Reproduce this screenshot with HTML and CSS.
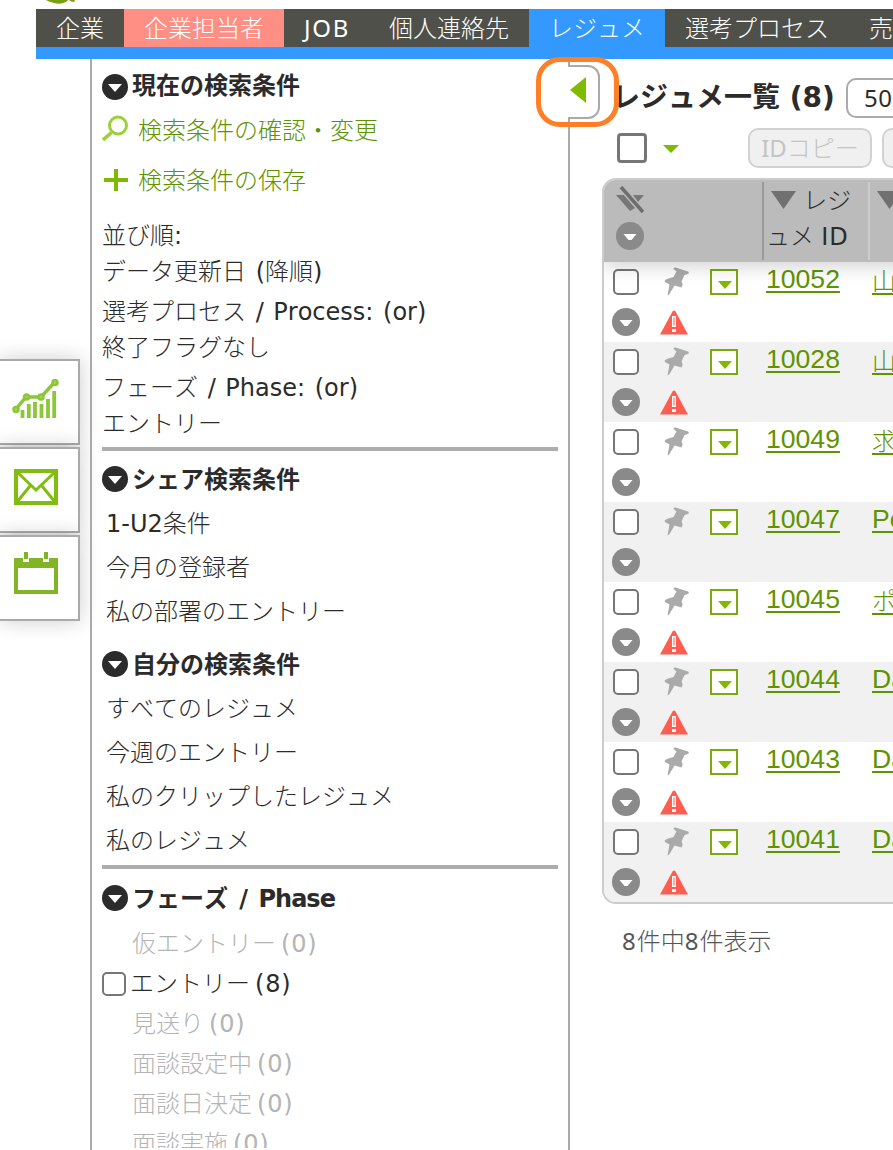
FILE: index.html
```html
<!DOCTYPE html>
<html lang="ja">
<head>
  <meta charset="UTF-8">
  <meta name="viewport" content="width=device-width, initial-scale=1.0">
  <title>レジュメ一覧</title>
  <link rel="stylesheet" href="styles.css">
</head>
<body>

  <!-- shared icons -->
  <svg class="defs" width="0" height="0">
    <symbol id="i-toggle" viewBox="0 0 26 26">
      <circle cx="13" cy="13" r="13" fill="#2b2b2b"/>
      <path d="M6 10h14l-7 8z" fill="#fff"/>
    </symbol>
    <symbol id="i-more" viewBox="0 0 28 28">
      <circle cx="14" cy="14" r="14" fill="#8a8a8a"/>
      <path d="M7.500 12h13l-5 6h-3z" fill="#fff"/>
    </symbol>
    <symbol id="i-pin" viewBox="0 0 26 30">
      <path d="M9.500 2q0-2 2-1.500L24 4.500q1.500 1 0 2.500l-3.500 1-3 6.500q2 3 0 6L10.500 18.500 5.500 27l-2 1.500 2-11L1 15q-1.500-2.500 5-4l3.500-1 3-5.500z" fill="#aaa"/>
    </symbol>
    <symbol id="i-warn" viewBox="0 0 28 25">
      <path d="M12.500 1.500q1.500-2 3 0L28 24.500H0z" fill="#ff5d50"/>
      <path d="M12 6h4v11h-4zM12 19h4v3h-4z" fill="#fff"/>
      <path d="M13 7.500h2v8h-2z" fill="#ffaca6"/>
    </symbol>
  </svg>

  <header class="logo">
    <svg width="36" height="5" viewBox="0 0 36 5"><path d="M1 0h22l-2 2q-6 3-12 1-5-1-8-3zM24 0h6l-1 2q-3 0-5-2z" fill="#7a9f14"/></svg>
  </header>

  <nav class="menu">
    <a>企業</a>
    <a class="contact">企業担当者</a>
    <a><span class="job">JOB</span></a>
    <a>個人連絡先</a>
    <a class="active">レジュメ</a>
    <a>選考プロセス</a>
    <a>売上</a>
  </nav>

  <div class="layout">
    <div class="rail">
      <div class="rail-tab">
        <svg width="48" height="42" viewBox="0 0 48 42" fill="none" stroke="#8cc63a">
          <path d="M4 30 14 18h15L43 3" stroke-width="3.500"/>
          <g fill="#a8d05c" stroke-width="2.500"><circle cx="4" cy="30.500" r="2.500"/><circle cx="14.500" cy="18" r="2.500"/><circle cx="29" cy="18" r="2.500"/><circle cx="43" cy="3.500" r="2.500"/></g>
          <path d="M10.500 39v-8M16.800 39V25M23 39V23M29.500 39V25M36 39V20M42.200 39V12" stroke-width="3.800"/>
        </svg>
      </div>
      <div class="rail-tab">
        <svg width="44" height="36" viewBox="0 0 44 36" fill="none" stroke="#80bd10">
          <path d="M2 2h40v32H2z" stroke-width="4"/>
          <path d="M3 3l19 18L41 3M3 33l13-16M41 33L28 17" stroke-width="3"/>
        </svg>
      </div>
      <div class="rail-tab">
        <svg width="44" height="44" viewBox="0 0 44 44">
          <path d="M0 7h44v36H0zM4 17v22h36V17z" fill="#82b526" fill-rule="evenodd"/>
          <path d="M9 6h6v5H9zM29 6h6v5h-6z" fill="#fff"/>
          <path d="M10 1h4v7h-4zM30 1h4v7h-4z" fill="#82b526"/>
        </svg>
      </div>
    </div>

    <aside class="sidebar">
      <h2 class="first"><svg width="26" height="26"><use href="#i-toggle"/></svg>現在の検索条件</h2>
      <a class="action">
        <svg class="lens" width="26" height="26" viewBox="0 0 26 26" fill="none"><circle cx="16" cy="10.500" r="8.500" stroke="#9bd03c" stroke-width="3"/><path d="M9.500 17.500 1 25" stroke="#9bd03c" stroke-width="3.500"/></svg>
        <span>検索条件の確認・変更</span>
      </a>
      <a class="action">
        <svg width="26" height="26" viewBox="0 0 26 26"><path d="M2 13h24M14 2v22" stroke="#7fba00" stroke-width="4"/></svg>
        <span>検索条件の保存</span>
      </a>

      <div class="cond">並び順<span class="en">:</span><br>データ更新日<span class="en"> (</span>降順<span class="en">)</span></div>
      <div class="cond">選考プロセス<span class="en"> / Process: (or)</span><br>終了フラグなし</div>
      <div class="cond">フェーズ<span class="en"> / Phase: (or)</span><br>エントリー</div>

      <hr>
      <h2><svg width="26" height="26"><use href="#i-toggle"/></svg>シェア検索条件</h2>
      <ul>
        <li><span class="en">1-U2</span>条件</li>
        <li>今月の登録者</li>
        <li>私の部署のエントリー</li>
      </ul>
      <h2 class="own"><svg width="26" height="26"><use href="#i-toggle"/></svg>自分の検索条件</h2>
      <ul>
        <li>すべてのレジュメ</li>
        <li>今週のエントリー</li>
        <li>私のクリップしたレジュメ</li>
        <li>私のレジュメ</li>
      </ul>

      <hr class="last">
      <h2><svg width="26" height="26"><use href="#i-toggle"/></svg><span>フェーズ<span class="en"> / Phase</span></span></h2>
      <div class="phases">
        <div class="phase">仮エントリー<span class="en">(0)</span></div>
        <div class="phase on"><i class="check"></i>エントリー<span class="en">(8)</span></div>
        <div class="phase">見送り<span class="en">(0)</span></div>
        <div class="phase">面談設定中<span class="en">(0)</span></div>
        <div class="phase">面談日決定<span class="en">(0)</span></div>
        <div class="phase">面談実施<span class="en">(0)</span></div>
      </div>

      <div class="collapse"><svg width="16" height="26" viewBox="0 0 16 26"><path d="M0 13 16 0v26z" fill="#80bb00"/></svg></div>
      <div class="highlight"></div>
    </aside>

    <main>
      <div class="title-row">
        <h1>レジュメ一覧<span class="en"> (8)</span></h1>
        <div class="select">50</div>
      </div>
      <div class="tools">
        <i class="check big"></i>
        <svg class="caret" width="16" height="8"><path d="M0 0h16L8 8z" fill="#7fba00"/></svg>
        <button disabled><span class="id-label">ID</span>コピー</button>
        <button disabled></button>
      </div>

      <div class="table">
        <div class="thead">
          <div class="th-icons">
            <svg width="28" height="28" viewBox="0 0 28 28"><path d="M0 9h8l11 13-5 3zM17 9h11l-6 7z" fill="#777"/><path d="M5 1l22 25" stroke="#bbb" stroke-width="6"/><path d="M5 1l22 25" stroke="#6e6e6e" stroke-width="3.500"/></svg>
            <svg width="28" height="28"><use href="#i-more"/></svg>
          </div>
          <div class="th"><svg width="25" height="18"><path d="M0 0h25L12.500 18z" fill="#707070"/></svg> レジ<br>ュメ <span class="en">ID</span></div>
          <div class="th light"><svg width="25" height="18"><path d="M0 0h25L12.500 18z" fill="#707070"/></svg></div>
        </div>
        <div id="rows"></div>
      </div>
      <p class="count"><span class="en">8</span>件中<span class="en">8</span>件表示</p>
    </main>
  </div>

  <script>
    const resumes = [
      { id: 10052, name: '山', warn: true },
      { id: 10028, name: '山', warn: true },
      { id: 10049, name: '求', warn: false },
      { id: 10047, name: 'Pe', warn: false },
      { id: 10045, name: 'ポ', warn: true },
      { id: 10044, name: 'Da', warn: true },
      { id: 10043, name: 'Da', warn: true },
      { id: 10041, name: 'Da', warn: true }
    ];

    document.getElementById('rows').innerHTML = resumes.map(r => `
      <div class="row">
        <i class="check"></i>
        <svg class="pin" width="26" height="30"><use href="#i-pin"/></svg>
        <span class="drop"><svg width="14" height="8"><path d="M0 0h14L7 8z" fill="#7fba00"/></svg></span>
        <a class="id">${r.id}</a>
        <a class="name${/[A-Z]/.test(r.name) ? '' : ' ja'}">${r.name}</a>
        <svg class="more" width="28" height="28"><use href="#i-more"/></svg>
        ${r.warn ? '<svg class="warn" width="28" height="25"><use href="#i-warn"/></svg>' : ''}
      </div>`).join('');
  </script>
</body>
</html>
```
FILE: styles.css
```css
* {
  box-sizing: border-box;
}
body {
  margin: 0;
  height: 1150px;
  overflow: hidden;
  background: #fff;
  color: #2b2b2b;
  font-family: "Noto Sans", "Noto Sans CJK JP", sans-serif;
  font-size: 24px;
  font-weight: 300;
  font-kerning: none;
}
svg {
  display: block;
  flex: none;
}
.defs {
  position: absolute;
}
.en {
  font-family: "DejaVu Sans", sans-serif;
  font-weight: 400;
  line-height: 1;
}
.logo {
  height: 9px;
  padding-left: 45px;
}

/* top menu */
.menu {
  display: flex;
  height: 50px;
  margin-left: 36px;
  background: #50504a;
  border-bottom: 12px solid #3399ff;
  overflow: hidden;
  color: #fff;
}
.menu a {
  flex: none;
  padding: 0 20px;
  line-height: 38px;
  white-space: nowrap;
}
.menu .contact {
  background: #ff8f85;
}
.menu .active {
  background: #3399ff;
}
.job {
  display: inline-block;
  width: 45px;
  font-weight: 400;
  letter-spacing: 1.700px;
}

.layout {
  display: flex;
  height: 1091px;
}

/* left rail */
.rail {
  flex: none;
  width: 90px;
  padding-top: 300px;
}
.rail-tab {
  width: 80px;
  height: 86px;
  margin-bottom: 2px;
  padding: 18px 0 0 12px;
  background: #fff;
  border: 2px solid #aaa;
  border-left: 0;
  box-shadow: 0 0 20px rgba(0, 0, 0, 0.2);
}
.rail-tab + .rail-tab {
  padding: 20px 0 0 14px;
}
.rail-tab:nth-child(3) {
  padding-top: 14px;
}

/* search conditions */
.sidebar {
  position: relative;
  flex: none;
  width: 480px;
  padding: 8px 10px 0;
  border-left: 2px solid #aaa;
  border-right: 2px solid #aaa;
  white-space: nowrap;
}
.sidebar h2 {
  display: flex;
  align-items: center;
  gap: 4px;
  height: 36px;
  margin: 0;
  font-size: 24px;
  font-weight: 700;
  line-height: 36px;
}
.sidebar h2 .en {
  font-weight: 700;
  letter-spacing: -1px;
  word-spacing: 4px;
}
.sidebar h2.first {
  margin-bottom: 2px;
}
.sidebar h2.first svg {
  margin-top: 4px;
}
.sidebar h2.own {
  margin-top: 13px;
}
.action {
  display: flex;
  align-items: center;
  gap: 10px;
  height: 50px;
  color: #5e9400;
}
.action span {
  padding-bottom: 3px;
}
.action .lens {
  margin-bottom: 5px;
}
.cond {
  margin-top: 4px;
  line-height: 36px;
}
.cond .en {
  word-spacing: 2px;
}
.action + .cond {
  margin-top: 12px;
}
.sidebar hr {
  height: 4px;
  margin: 6px 0 10px;
  border: 0;
  background: #adadad;
}
.sidebar hr.last {
  margin: 3px 0 11px;
}
.sidebar ul {
  margin: 4px 0 0;
  padding: 0 0 0 4px;
  list-style: none;
  line-height: 44px;
}
.phases {
  height: 227px;
  margin-top: 5px;
  overflow: hidden;
}
.phase {
  display: flex;
  align-items: center;
  height: 40px;
  padding-left: 30px;
  color: #b4b4b4;
}
.phase .en {
  margin: 5px 0 0 5px;
  letter-spacing: 0.800px;
}
.phase.on {
  padding-left: 0;
  color: #2b2b2b;
}
.phase .check {
  width: 24px;
  height: 24px;
  margin: 6px 4px 0 0;
}
.check {
  display: block;
  flex: none;
  width: 26px;
  height: 26px;
  background: #fff;
  border: 2px solid #767676;
  border-radius: 5px;
}
.check.big {
  width: 30px;
  height: 30px;
  border-width: 3px;
  border-radius: 4px;
}

/* collapse handle sits on the sidebar edge */
.collapse {
  position: absolute;
  top: 6px;
  right: -32px;
  width: 32px;
  height: 54px;
  padding: 10px 0 0 2px;
  background: #fff;
  border: 2px solid #aaa;
  border-left: 0;
  border-radius: 0 12px 12px 0;
}
/* reaches up over the menu's blue line */
.highlight {
  position: absolute;
  top: -2px;
  right: -51px;
  width: 83px;
  height: 70px;
  border: 5px solid #ff7f27;
  border-radius: 24px;
}

/* list */
main {
  flex: 1;
  min-width: 0;
  padding: 19px 0 0 32px;
}
.title-row {
  display: flex;
  align-items: center;
  height: 40px;
  overflow: hidden;
  white-space: nowrap;
}
h1 {
  flex: none;
  width: 234px;
  margin: 0 0 3px 10px;
  font-size: 28px;
  line-height: 37px;
}
h1 .en {
  font-weight: 700;
}
.select {
  flex: none;
  width: 120px;
  height: 40px;
  padding-left: 16px;
  border: 2px solid #aaa;
  border-radius: 10px;
  font-weight: 400;
  letter-spacing: 0.5px;
  line-height: 35px;
}
.tools {
  display: flex;
  align-items: center;
  height: 40px;
  margin: 10px 0;
  padding-left: 15px;
  overflow: hidden;
}
.caret {
  margin: 2px 69px 0 16px;
}
.tools button {
  flex: none;
  width: 124px;
  height: 40px;
  margin-right: 10px;
  padding: 0;
  background: #f0f0f0;
  border: 2px solid #d2d2d2;
  border-radius: 10px;
  color: #c4c4c4;
  font: inherit;
  line-height: 34px;
}
.id-label {
  font-weight: 400;
}
.table {
  width: 400px;
  border: 2px solid #ccc;
  border-radius: 14px;
  overflow: hidden;
}
.thead {
  position: relative;
  display: flex;
  height: 82px;
  padding: 2px 0;
  background: #bbb;
  box-shadow: 0 3px 20px rgba(0, 0, 0, 0.2);
}
.th-icons {
  width: 158px;
  padding: 4px 0 0 12px;
}
.th-icons svg + svg {
  margin-top: 8px;
}
.th {
  width: 106px;
  border-left: 2px solid #999;
  padding-left: 2px;
  line-height: 36px;
  word-spacing: 1px;
}
.th svg {
  display: inline-block;
  margin-left: 5px;
}
.th .en {
  letter-spacing: 1px;
}
.th.light {
  border-color: #ccc;
}
.row {
  display: grid;
  grid-template-columns: 48px 50px 56px 106px 1fr;
  grid-template-rows: 40px 40px;
  height: 80px;
  padding-left: 8px;
}
.row:nth-child(even) {
  background: #f1f1f1;
}
.row .check {
  margin: 7px 0 0 1px;
}
.pin {
  margin: 5px 0 0 4px;
}
.drop {
  width: 28px;
  height: 26px;
  margin-top: 7px;
  padding: 10px 0 0 6px;
  background: #fff;
  border: 2px solid #7aaa10;
}
.row a {
  color: #5e9400;
  font-family: "Liberation Sans", "Noto Sans CJK JP", sans-serif;
  font-size: 26.600px;
  line-height: 34px;
  text-decoration: underline;
  text-decoration-thickness: 2px;
  text-underline-offset: 3px;
}
.row .name {
  white-space: nowrap;
}
.row .name.ja {
  font-size: 24px;
  line-height: 39px;
}
.more {
  grid-column: 1;
  grid-row: 2;
  margin-top: 6px;
}
.warn {
  grid-column: 2;
  grid-row: 2;
  margin-top: 8px;
}
.count {
  margin: 19px 0 0 20px;
  color: #555;
  line-height: 36px;
}
.count .en {
  font-family: "Noto Sans", sans-serif;
  letter-spacing: 1px;
}
```
